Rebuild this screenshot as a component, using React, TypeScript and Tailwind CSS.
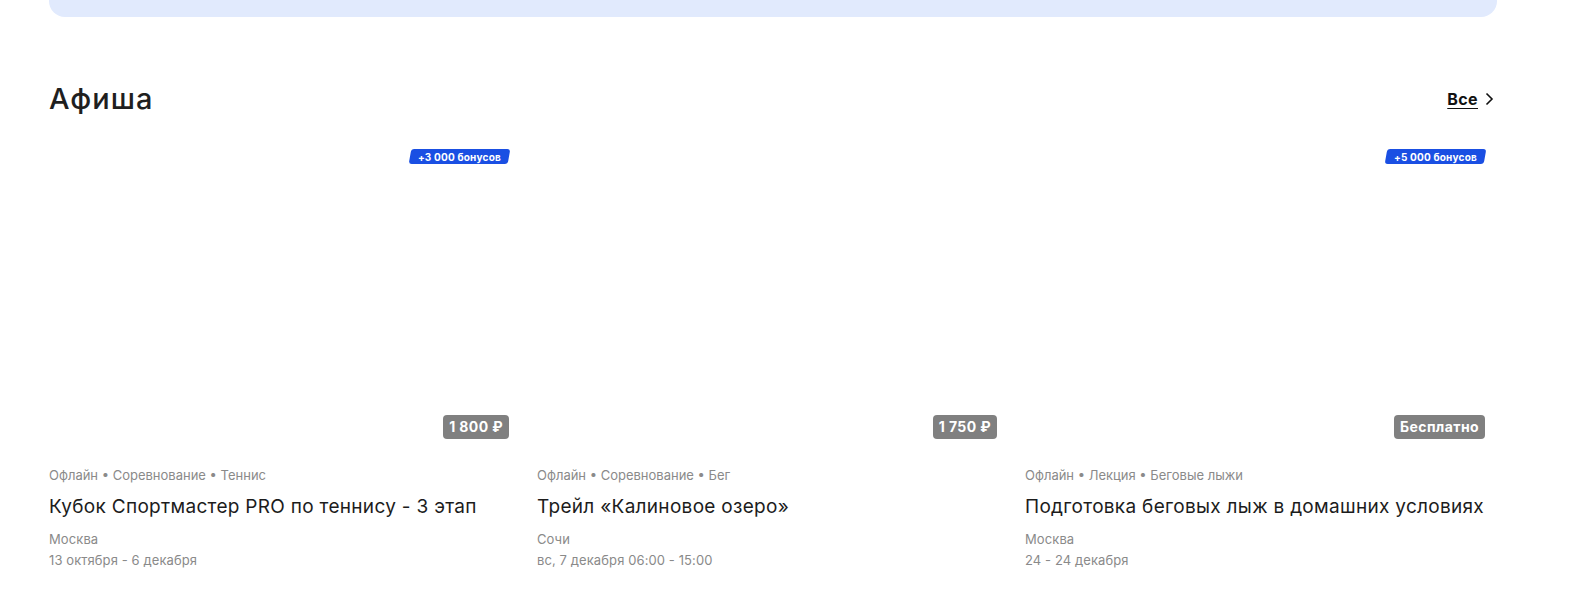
import React from "react";

type EventCard = {
  tags: string[];
  title: string;
  city: string;
  date: string;
  price: string;
  bonus?: string;
};

const events: EventCard[] = [
  {
    tags: ["Офлайн", "Соревнование", "Теннис"],
    title: "Кубок Спортмастер PRO по теннису - 3 этап",
    city: "Москва",
    date: "13 октября - 6 декабря",
    price: "1 800 ₽",
    bonus: "+3 000 бонусов",
  },
  {
    tags: ["Офлайн", "Соревнование", "Бег"],
    title: "Трейл «Калиновое озеро»",
    city: "Сочи",
    date: "вс, 7 декабря 06:00 - 15:00",
    price: "1 750 ₽",
  },
  {
    tags: ["Офлайн", "Лекция", "Беговые лыжи"],
    title: "Подготовка беговых лыж в домашних условиях",
    city: "Москва",
    date: "24 - 24 декабря",
    price: "Бесплатно",
    bonus: "+5 000 бонусов",
  },
];

const Card = ({ event }: { event: EventCard }) => {
  return (
    <a href="#" className="flex flex-col">
      <div className="relative h-[305px] w-full bg-white">
        {event.bonus && (
          <div className="absolute right-[8px] top-[7px] flex h-[15px] -skew-x-[10deg] items-center rounded-[3px] bg-[#1a4fe3] px-[8px]">
            <span className="skew-x-[10deg] text-[10px] font-bold leading-none tracking-[0.2px] text-white">
              {event.bonus}
            </span>
          </div>
        )}
        <div className="absolute bottom-[8px] right-[8px] flex h-[24px] items-center rounded-[4px] bg-[#808080] px-[6px] text-[14px] font-bold leading-none tracking-[0.4px] text-white">
          {event.price}
        </div>
      </div>
      <div className="mt-[18px] text-[13px] leading-5 text-[#8a8a8a]">
        {event.tags.join(" • ")}
      </div>
      <div className="mt-[10px] text-[19px] leading-6 tracking-[0.3px] text-[#1c1c1c]">
        {event.title}
      </div>
      <div className="mt-[10px] text-[13px] leading-5 tracking-[0.1px] text-[#8a8a8a]">
        {event.city}
      </div>
      <div className="mt-[1px] text-[13px] leading-5 tracking-[0.1px] text-[#8a8a8a]">
        {event.date}
      </div>
    </a>
  );
};

export default function App() {
  return (
    <div
      className="min-h-[615px] w-full bg-white"
      style={{ fontFamily: "Inter, 'Noto Sans', sans-serif" }}
    >
      <div className="mx-[49px] w-[1448px]">
        <div className="h-[17px] rounded-b-[16px] bg-[#e1eafd]" />

        <div className="mt-[64px] flex h-[36px] items-center justify-between">
          <h2 className="text-[29px] font-medium leading-9 tracking-[1px] text-[#1f1f1f]">
            Афиша
          </h2>
          <a
            href="#"
            className="mr-[3px] flex items-center gap-[6px] text-[16px] font-bold tracking-[0.4px] text-[#111] underline underline-offset-[3px]"
          >
            Все
            <svg
              width="10"
              height="14"
              viewBox="0 0 10 14"
              fill="none"
              stroke="#111"
              strokeWidth="1.6"
            >
              <path d="M2.5 1.5L8 7l-5.5 5.5" />
            </svg>
          </a>
        </div>

        <div className="mt-[25px] grid w-[1444px] grid-cols-3 gap-[20px]">
          {events.map((e) => (
            <Card key={e.title} event={e} />
          ))}
        </div>
      </div>
    </div>
  );
}
